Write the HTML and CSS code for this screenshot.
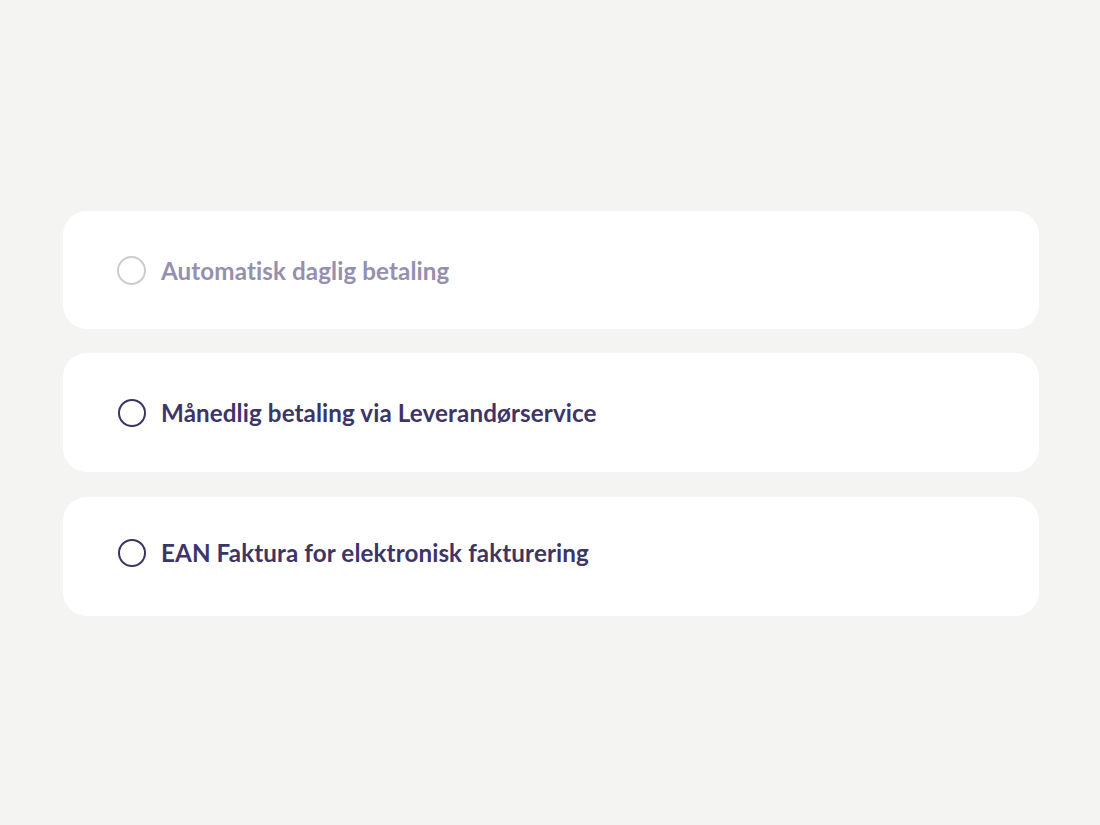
FILE: index.html
```html
<!DOCTYPE html>
<html lang="da">
<head>
    <meta charset="UTF-8">
    <meta name="viewport" content="width=device-width, initial-scale=1.0">
    <title>Betalingsmetode</title>
    <link rel="stylesheet" href="styles.css">
</head>
<body>

    <!-- Payment options -->
    <div class="options">
        <label class="option option-disabled">
            <span class="radio"></span>
            <span class="option-label">Automatisk daglig betaling</span>
        </label>

        <label class="option">
            <span class="radio"></span>
            <span class="option-label">Månedlig betaling via Leverandørservice</span>
        </label>

        <label class="option option-last">
            <span class="radio"></span>
            <span class="option-label">EAN Faktura for elektronisk fakturering</span>
        </label>
    </div>

</body>
</html>
```

FILE: styles.css
```css
body {
    font-family: Lato, "Open Sans", sans-serif;
    background-color: #f4f4f2;
    margin: 0;
    min-height: 825px;
}

.options {
    width: 976px;
    margin-left: 63px;
    padding-top: 211px;
    display: flex;
    flex-direction: column;
    gap: 24px;
}

.option {
    display: flex;
    align-items: center;
    box-sizing: border-box;
    height: 119px;
    padding-left: 55px;
    background: #ffffff;
    border-radius: 24px;
    cursor: pointer;
}

.option-last {
    margin-top: 1px;
    padding-bottom: 8px;
}

.radio {
    width: 24px;
    height: 24px;
    border: 2px solid #3b3563;
    border-radius: 50%;
    flex-shrink: 0;
}

.option-label {
    margin-left: 15px;
    font-size: 24.2px;
    font-weight: 700;
    letter-spacing: 0.1px;
    color: #3d3567;
}

.option-disabled {
    height: 118px;
    padding-left: 54px;
}

.option-disabled .radio {
    border: 2px solid #cdccd1;
    width: 25px;
    height: 25px;
}

.option-disabled .option-label {
    margin-left: 15px;
    color: #958fb0;
}
```
